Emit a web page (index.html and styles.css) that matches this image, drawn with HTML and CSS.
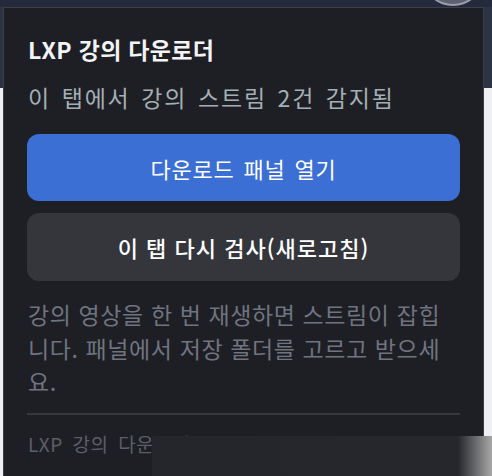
FILE: index.html
```html
<!DOCTYPE html>
<html lang="ko">
<head>
  <meta charset="UTF-8" />
  <title>LXP 강의 다운로더</title>
  <link rel="stylesheet" href="styles.css">
</head>
<body>
  <div class="tab-avatar"></div>
  <div class="popup">
    <h1 class="title">LXP 강의 다운로더</h1>
    <div class="status">이 탭에서 강의 스트림 2건 감지됨</div>
    <button class="btn btn-primary">다운로드 패널 열기</button>
    <button class="btn btn-secondary">이 탭 다시 검사(새로고침)</button>
    <p class="hint">강의 영상을 한 번 재생하면 스트림이 잡힙니다. 패널에서 저장 폴더를 고르고 받으세요.</p>
    <div class="footer">LXP 강의 다운로더</div>
  </div>
  <div class="shade"></div>
</body>
</html>
```

FILE: styles.css
```css
* { box-sizing: border-box; }

html, body {
  width: 492px;
  height: 476px;
  overflow: hidden;
}

body {
  margin: 0;
  position: relative;
  font-family: "Noto Sans CJK KR", "Noto Sans", sans-serif;
  background:
    linear-gradient(to bottom, #232a3c 0, #232a3c 7px, transparent 7px),
    linear-gradient(to bottom, #2b3442 0, #2b3442 88px, #eef0f2 88px);
  padding: 7px 8px 0 3px;
}

.tab-avatar {
  position: absolute;
  left: 425px;
  top: -42px;
  width: 56px;
  height: 48px;
  border-radius: 50%;
  background: #5c6272;
  border: 2px solid #9a9ea8;
}

.popup {
  position: relative;
  height: 480px;
  background-color: #1e1f24;
  border: 1px solid #3c3f47;
  border-bottom: none;
  padding: 26px 23px 0 23px;
  display: flex;
  flex-direction: column;
}

.title {
  margin: 0 0 0 1px;
  font-size: 23px;
  font-weight: bold;
  letter-spacing: 0.3px;
  color: #f2f3f5;
  line-height: 30px;
}

.status {
  margin: 18px 0 0 1px;
  font-size: 23px;
  letter-spacing: 1.8px;
  word-spacing: 2.5px;
  color: #a3afb4;
  line-height: 30px;
}

.btn {
  font-family: inherit;
  border: none;
  border-radius: 12px;
  height: 67px;
  font-size: 22px;
  color: #ffffff;
  cursor: pointer;
}

.btn-primary {
  margin-top: 22px;
  background-color: #3b6fd4;
  letter-spacing: 0.8px;
  word-spacing: 2px;
}

.btn-secondary {
  margin-top: 12px;
  height: 68px;
  background-color: #34363c;
  font-weight: 500;
  letter-spacing: 1px;
}

.hint {
  margin: 17px 0 0 1px;
  font-size: 23px;
  letter-spacing: 0.6px;
  line-height: 33.5px;
  color: #6f7480;
}

.footer {
  margin-top: 14px;
  padding-top: 15px;
  border-top: 2px solid #36383e;
  font-size: 19px;
  letter-spacing: 0.5px;
  word-spacing: 4px;
  color: #5b5f68;
  padding-left: 1px;
}

.shade {
  position: absolute;
  left: 152px;
  top: 436px;
  right: 0;
  bottom: 0;
  background: linear-gradient(to right, #25262b 0%, #26272c 90%, #a8a8a8 100%);
}
```
